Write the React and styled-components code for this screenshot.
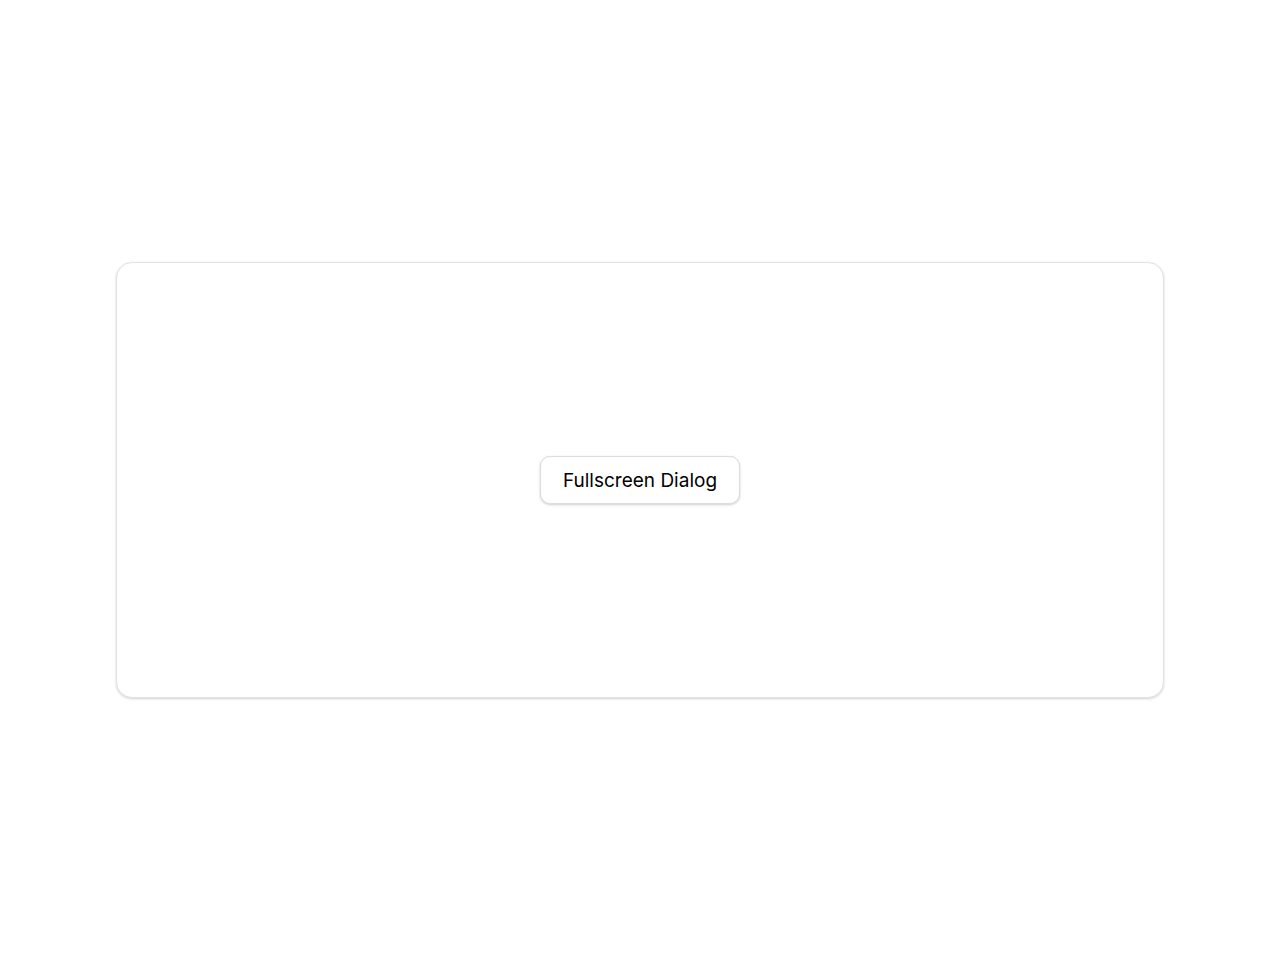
import React from "react";
import styled, { createGlobalStyle } from "styled-components";

const Global = createGlobalStyle`
  html, body { margin: 0; padding: 0; background: #ffffff; }
  body { font-family: Inter, "Noto Sans", sans-serif; color: #111; }
`;

const Page = styled.div`
  min-height: 960px;
  display: flex;
  align-items: center;
  justify-content: center;
  padding: 0 116px;
  box-sizing: border-box;
`;

const Card = styled.div`
  flex: 1;
  height: 436px;
  box-sizing: border-box;
  border: 1px solid #e2e2e2;
  border-radius: 16px;
  background: #fff;
  box-shadow: 0 1px 3px rgba(0, 0, 0, 0.12), 0 1px 2px rgba(0, 0, 0, 0.06);
  display: flex;
  align-items: center;
  justify-content: center;
`;

const Button = styled.button`
  height: 48px;
  width: 200px;
  box-sizing: border-box;
  border: 1px solid #dcdcdc;
  border-radius: 10px;
  background: #fff;
  box-shadow: 0 1px 3px rgba(0, 0, 0, 0.14), 0 1px 2px rgba(0, 0, 0, 0.06);
  font-family: Inter, "Noto Sans", sans-serif;
  font-size: 19px;
  font-weight: 440;
  color: #000;
  cursor: pointer;
  padding: 0;
`;

export default function App() {
  return (
    <>
      <Global />
      <Page>
        <Card>
          <Button>Fullscreen Dialog</Button>
        </Card>
      </Page>
    </>
  );
}
